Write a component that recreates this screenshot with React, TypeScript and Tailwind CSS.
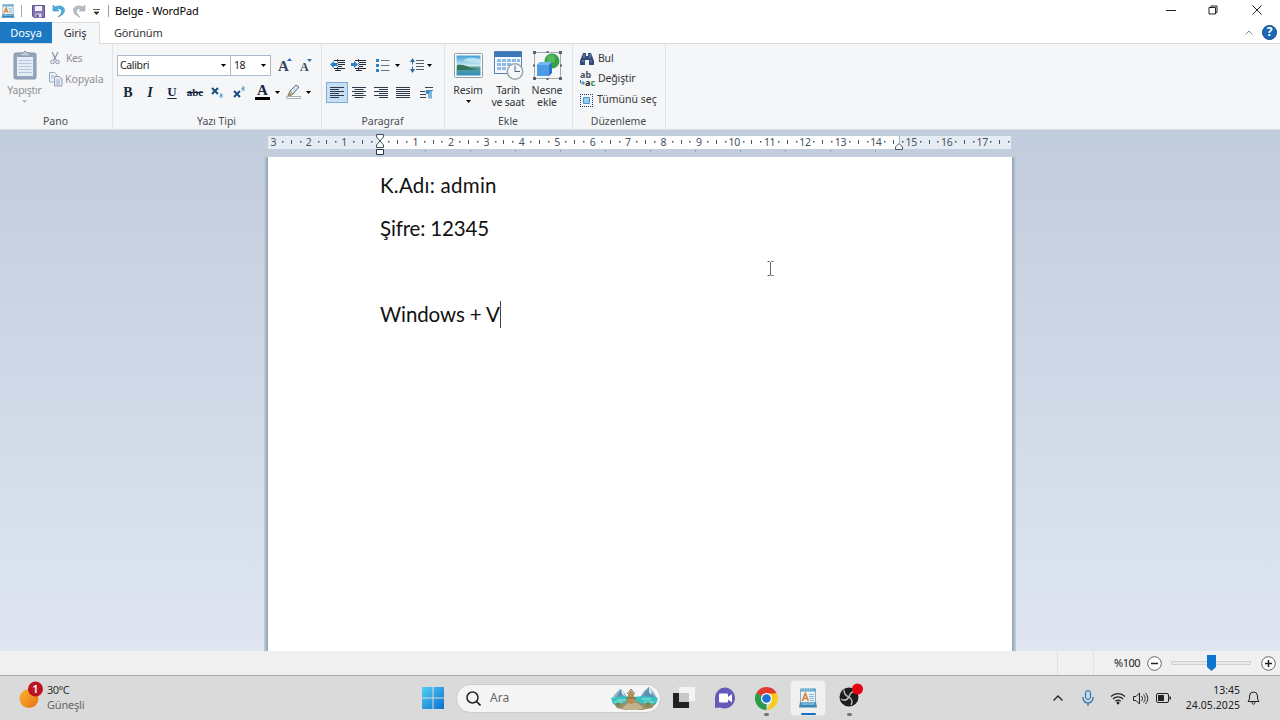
import type { ReactNode } from "react";

type IconProps = { w: number; h: number; className?: string; children: ReactNode };

function Icon({ w, h, className = "", children }: IconProps) {
  return (
    <svg width={w} height={h} viewBox={`0 0 ${w} ${h}`} fill="none" className={`block shrink-0 ${className}`}>
      {children}
    </svg>
  );
}

function Caret({ className = "" }: { className?: string }) {
  return (
    <Icon w={5} h={3} className={className}>
      <path d="M0 0h5L2.500 3z" fill="currentColor" />
    </Icon>
  );
}

function DocIcon({ size }: { size: number }) {
  return (
    <svg width={size} height={size} viewBox="0 0 20 20" className="block shrink-0">
      <path d="M2.500 1h15v14h-15z" fill="#e9f3f8" stroke="#6a9fbc" strokeWidth=".8" />
      <path d="M2.500.5h15v3h-15z" fill="#5aa2c8" />
      <path d="M4 .5v2M6.500.5v2M9 .5v2M11.500.5v2M14 .5v2" stroke="#d7eef8" strokeWidth=".8" />
      <path d="M4.300 13 7.300 5.500 10.300 13M5.500 10.500h3.600" stroke="#e07c34" strokeWidth="1.600" fill="none" />
      <path d="M11 6.500h5M11 8.500h5M11.500 10.500h4.500M12 12.500h4" stroke="#7fb2cd" strokeWidth=".9" />
      <path d="M2 14.500h16l1 5H1z" fill="#3b86b4" />
      <path d="M3.500 16h13" stroke="#b7dff0" />
    </svg>
  );
}

function TitleBar() {
  return (
    <header className="flex h-[22px] items-center bg-white">
      <div className="ml-px"><DocIcon size={14} /></div>
      <div className="ml-[6px] h-3 w-px bg-[#a9a9a9]" />
      <Icon w={13} h={13} className="ml-[10px]">
        <path d="M.5.5h12v12H2L.5 11z" fill="#8574b4" stroke="#62528f" />
        <path d="M3 1h7v5H3z" fill="#f3f2fa" />
        <path d="M3.500 8.500h6v4h-6z" fill="#dad7ea" />
        <path d="M4.500 9.500h2v3h-2z" fill="#54457f" />
      </Icon>
      <Icon w={13} h={14} className="ml-[7px]">
        <path d="M1 1v6h6L5 5c3-1 5 .5 4.500 3-.3 2-2 3.500-3.500 5 4-1.500 6.500-3.500 6.500-7C12.500 2.500 7.500.500 3 3z" fill="#4fabd9" stroke="#3490c2" strokeWidth=".6" />
      </Icon>
      <Icon w={13} h={14} className="ml-[8px]">
        <path d="M12 1v6H6l2-2C5 4 3 5.500 3.500 8c.3 2 2 3.500 3.500 5C3 11.500.5 9.500.5 6 .5 2.500 5.500.500 10 3z" fill="#b4bdc7" stroke="#98a3af" strokeWidth=".6" />
      </Icon>
      <Icon w={7} h={6} className="ml-[7px] mt-px">
        <path d="M0 .5h7M1 3h5L3.500 5.500z" stroke="#333" strokeWidth=".8" fill="#333" />
      </Icon>
      <div className="ml-[8px] h-3 w-px bg-[#999]" />
      <h1 className="ml-[6px] text-[11px] tracking-[-0.15px] text-black">Belge - WordPad</h1>
      <div className="ml-auto flex items-center text-[#222]">
        <Icon w={10} h={10} className="-mt-[2px]"><path d="M0 5.500h10" stroke="currentColor" /></Icon>
        <Icon w={10} h={10} className="-mt-[2px] ml-[32px]">
          <path d="M1 2.500h6.500V9H1zM3 2.500V1h6v6.500H7.500" stroke="currentColor" />
        </Icon>
        <Icon w={10} h={10} className="-mt-[2px] ml-[34px] mr-[18px]"><path d="m.5.5 9 9m0-9-9 9" stroke="currentColor" /></Icon>
      </div>
    </header>
  );
}

function Tabs() {
  return (
    <nav className="flex h-[22px] items-stretch border-b border-[#dadbdc] bg-white text-[11px]">
      <div className="flex w-[52px] items-center justify-center bg-[#1c78c3] pt-px text-white">Dosya</div>
      <div className="-mb-px flex w-[48px] items-center justify-center border-r border-t border-[#dadbdc] bg-[#f5f6f7] pr-px tracking-[-0.2px] text-[#333]">Giriş</div>
      <div className="flex items-center pl-[14px] pt-px tracking-[-0.3px] text-[#333]"><span className="tracking-[-0.2px]">Görünüm</span></div>
      <div className="ml-auto flex items-center gap-[9px] pr-[3px] pb-px">
        <Icon w={8} h={5}><path d="m.5 4.500 3.500-3.500 3.500 3.500" stroke="#8b8e94" /></Icon>
        <div className="flex size-[15px] items-center justify-center rounded-full border border-[#0d4c8e] bg-[#1d68b5] text-[12px] font-bold leading-none text-white">?</div>
      </div>
    </nav>
  );
}

function Group({ label, width, children }: { label: string; width: string; children: ReactNode }) {
  return (
    <section className={`flex shrink-0 flex-col border-r border-[#e1e3e6] ${width}`}>
      <div className="h-[70px]">{children}</div>
      <div className="flex h-[15px] items-center justify-center pr-px text-[10.500px] tracking-[-0.05px] text-[#4b4e53]">{label}</div>
    </section>
  );
}

function PasteGroup() {
  return (
    <Group label="Pano" width="w-[113px]">
      <div className="flex text-[10.500px] text-[#8e9197]">
        <div className="flex w-[49px] flex-col items-center pt-[6px]">
          <Icon w={24} h={30} className="ml-px">
            <rect x="1" y="3" width="22" height="26" rx="1.500" fill="#94a5bd" stroke="#8796ae" />
            <path d="M4 7h16v19H4z" fill="#e5ecf6" />
            <path d="M5.500 10.500h13m-13 3h13m-13 3h13m-13 3h13m-13 3h13" stroke="#b5c5dc" />
            <path d="M7 6V3h3l2-2 2 2h3v3z" fill="#bfcadb" stroke="#8291a8" />
          </Icon>
          <span className="mt-[3px] leading-[14px] tracking-[-0.25px]">Yapıştır</span>
          <Caret className="mt-[3px] text-[#b5b8bd]" />
        </div>
        <div className="pt-[6px]">
          <div className="flex h-4 items-center gap-[6px]">
            <Icon w={10} h={14} className="ml-[1px]">
              <path d="m2 1 4 8M8 1 4 9" stroke="#8996aa" strokeWidth="1.300" />
              <circle cx="2.500" cy="11" r="1.800" stroke="#8996aa" /><circle cx="7.500" cy="11" r="1.800" stroke="#8996aa" />
            </Icon>
            <span className="leading-none tracking-[-0.5px]">Kes</span>
          </div>
          <div className="mt-[5px] flex h-4 items-center gap-[2px]">
            <Icon w={14} h={15}>
              <path d="M.5.5h5L8 3v7H.5z" fill="#eef2f9" stroke="#9aa9c2" />
              <path d="M5.500 4.500h5L13 7v7H5.500z" fill="#e5ebf5" stroke="#8e9fbb" />
              <path d="M2 4h3M2 6h2m3 2h4m-4 2h4m-4 2h4" stroke="#9cabc8" />
            </Icon>
            <span className="leading-none tracking-[-0.05px]">Kopyala</span>
          </div>
        </div>
      </div>
    </Group>
  );
}

function FontGroup() {
  return (
    <Group label="Yazı Tipi" width="w-[209px]">
      <div className="mt-[11px] flex h-[21px] pl-[4px] text-[10.500px] text-[#222]">
        <div className="flex w-[114px] items-center justify-between border border-[#abbaca] bg-white pl-[2px] pr-[4px]"><span className="tracking-[-0.35px]">Calibri</span><Caret className="text-black" /></div>
        <div className="-ml-px flex w-[41px] items-center justify-between border border-[#abbaca] bg-white pl-[3px] pr-[4px]"><span className="tracking-[-0.4px]">18</span><Caret className="text-black" /></div>
        <div className="ml-[7px] flex w-[15px] font-['Liberation_Serif',serif] text-[15px] font-bold leading-[22px] text-[#34465d]">
          A<Icon w={5} h={3} className="-ml-[2px] mt-[3px]"><path d="m0 3 2.500-3L5 3z" fill="#2b71b5" /></Icon>
        </div>
        <div className="ml-[7px] flex w-[14px] font-['Liberation_Serif',serif] text-[12px] font-bold leading-[24px] text-[#34465d]">
          A<Icon w={5} h={3} className="-ml-[2px] mt-[4px]"><path d="M0 0h5L2.500 3z" fill="#2b71b5" /></Icon>
        </div>
      </div>
      <div className="mt-[5px] flex h-[22px] items-center pl-[4px] font-['Liberation_Serif',serif] text-[#14263e]">
        <span className="w-[22px] text-center text-[14px] font-bold">B</span>
        <span className="w-[22px] text-center text-[14px] font-bold italic">I</span>
        <span className="w-[22px] text-center text-[13px] font-bold underline decoration-1 underline-offset-2">U</span>
        <span className="w-[24px] pt-px text-center text-[11px] font-bold line-through decoration-1">abc</span>
        <Icon w={13} h={13} className="ml-[4px]">
          <path d="m1 2 6 6m0-6L1 8" stroke="#164b7d" strokeWidth="1.900" />
          <path d="M9 8h2v1.500H9V11h3" stroke="#3f91c2" strokeWidth=".9" />
        </Icon>
        <Icon w={13} h={13} className="ml-[9px]">
          <path d="m1 5 6 6m0-6-6 6" stroke="#164b7d" strokeWidth="1.900" />
          <path d="M9 1h2v1.500H9V4h3" stroke="#3f91c2" strokeWidth=".9" />
        </Icon>
        <div className="ml-[9px] flex w-[15px] flex-col items-center">
          <span className="text-[15px] font-bold leading-[13px]">A</span>
          <div className="h-[3px] w-full bg-black" />
        </div>
        <Caret className="ml-[5px] text-black" />
        <Icon w={15} h={16} className="ml-[6px]">
          <path d="M2 11.500 4 7l6-6 3 2-6 7-3 2z" fill="#d5e0ed" stroke="#65758b" />
          <path d="m4 7 3 3M2 12l2-3 1 2z" stroke="#9f8d4b" />
          <path d="M.5 12.500h14v2H.5z" fill="#fff" stroke="#a8afb8" />
        </Icon>
        <Caret className="ml-[5px] text-black" />
      </div>
    </Group>
  );
}

function AlignIcon({ kind }: { kind: "left" | "center" | "right" | "justify" }) {
  const paths = {
    left: "M0 .5h14M0 2.500h9M0 4.500h14M0 6.500h9M0 8.500h14M0 10.500h9",
    center: "M0 .5h14M2.500 2.500h9M0 4.500h14M2.500 6.500h9M0 8.500h14M2.500 10.500h9",
    right: "M0 .5h14M5 2.500h9M0 4.500h14M5 6.500h9M0 8.500h14M5 10.500h9",
    justify: "M0 .5h14M0 2.500h14M0 4.500h14M0 6.500h14M0 8.500h14M0 10.500h14",
  };
  return <Icon w={14} h={11}><path d={paths[kind]} stroke="#2e3949" /></Icon>;
}

function IndentIcon({ flip = false }: { flip?: boolean }) {
  return (
    <Icon w={15} h={13}>
      <path d="M4 1.500h11M8 3.500h7M8 5.500h7M8 7.500h4M4 9.500h11M5 11.500h6" stroke="#202a38" />
      <path d="M7.500 0v12" stroke="#536070" strokeDasharray="1 1" />
      <path d={flip ? "M0 4h3V2l4 3.500L3 9V7H0z" : "M7 4H4V2L0 5.500 4 9V7h3z"} fill="#2b80c7" />
    </Icon>
  );
}

function ParagraphGroup() {
  return (
    <Group label="Paragraf" width="w-[123px]">
      <div className="mt-[11px] flex h-[21px] items-center pl-[8px]">
        <IndentIcon />
        <div className="ml-[6px]"><IndentIcon flip /></div>
        <Icon w={14} h={13} className="ml-[10px]">
          <path d="M0 0h3v3H0zm0 5h3v3H0zm0 5h3v3H0z" fill="#2c83c6" />
          <path d="M5 1.500h8.500m-8.500 5h8.500m-8.500 5h8.500" stroke="#6a737f" />
        </Icon>
        <Caret className="ml-[5px] text-black" />
        <Icon w={15} h={15} className="ml-[10px]">
          <path d="M0 4 2.500 0 5 4H3v7h2l-2.500 4L0 11h2V4z" fill="#2669a8" />
          <path d="M0 7.500h5" stroke="#f5f6f7" strokeWidth="2" />
          <path d="M6 2.500h8m-8 3h8m-8 3h8m-8 3h8" stroke="#565e69" />
        </Icon>
        <Caret className="ml-[2px] text-black" />
      </div>
      <div className="mt-[5px] flex h-[22px] items-center pl-[4px]">
        <div className="flex h-[21px] w-[22px] items-center justify-center border border-[#79aedb] bg-[#c7dff5]"><AlignIcon kind="left" /></div>
        <div className="ml-[4px]"><AlignIcon kind="center" /></div>
        <div className="ml-[8px]"><AlignIcon kind="right" /></div>
        <div className="ml-[8px]"><AlignIcon kind="justify" /></div>
        <Icon w={13} h={13} className="ml-[10px]">
          <path d="M5 1.500h8M0 5.500h5M0 8.500h6M0 11.500h6" stroke="#37414f" />
          <path d="M9 4.500v8m2-8v8M6 4.500h7" stroke="#328ac5" strokeWidth="1.200" /><circle cx="7.500" cy="6" r="2" fill="#328ac5" />
        </Icon>
      </div>
    </Group>
  );
}

function InsertGroup() {
  return (
    <Group label="Ekle" width="w-[128px]">
      <div className="flex pl-[3px] text-center text-[10.500px] leading-[12px] text-[#33363b]">
        <div className="flex w-[40px] flex-col items-center pt-[9px]">
          <Icon w={29} h={25}>
            <defs><linearGradient id="sky" x1="0" y1="0" x2="0" y2="1"><stop stopColor="#3f9ed6" /><stop offset=".5" stopColor="#c6eaf0" /><stop offset=".6" stopColor="#5fa39c" /><stop offset="1" stopColor="#2b8dbd" /></linearGradient></defs>
            <rect x=".5" y=".5" width="28" height="24" rx="1" fill="#fbfcfd" stroke="#949da7" />
            <path d="M2.500 2.500h24v20h-24z" fill="url(#sky)" />
            <path d="M3 12c5-1 10 1 14 3l9 1-11 1L3 17z" fill="#367456" />
            <path d="M9 8c4-4 9-4 17-2v4z" fill="#d7f0f3" opacity=".7" />
          </Icon>
          <span className="mt-[6px] tracking-[-0.1px]">Resim</span>
          <Caret className="mt-[4px] text-black" />
        </div>
        <div className="flex w-[40px] flex-col items-center pt-[7px]">
          <Icon w={31} h={30}>
            <path d="M1.500.5h27v22h-27z" fill="#f6faff" stroke="#557fae" />
            <path d="M2 1h26v5H2z" fill="#3b77b8" />
            <path d="M4 8h4v3H4zm5 0h4v3H9zm5 0h4v3h-4zm5 0h4v3h-4zM4 12h4v3H4zm5 0h4v3H9zm5 0h4v3h-4zM4 16h4v3H4zm5 0h4v3H9zm15-8h3v3h-3z" fill="#8fbce6" />
            <circle cx="22" cy="20.500" r="7.700" fill="#f5f7f9" stroke="#a1a7af" strokeWidth="1.600" />
            <path d="M22 14.500v6h5" stroke="#4a6380" />
          </Icon>
          <span className="mt-[3px] tracking-[-0.2px]">Tarih<br />ve saat</span>
        </div>
        <div className="flex w-[38px] flex-col items-center pt-[7px]">
          <Icon w={29} h={29}>
            <path d="M1.500 1.500h26v26h-26z" stroke="#a5aab1" />
            <path d="M0 0h3v3H0zm13.500 0h2v2h-2zM26 0h3v3h-3zM0 13.500h2v2H0zm27 0h2v2h-2zM0 26h3v3H0zm13.500 1h2v2h-2zM26 26h3v3h-3z" fill="#5b626a" />
            <circle cx="19" cy="10" r="7.500" fill="#35a345" /><circle cx="18" cy="8" r="4" fill="#6ac86e" opacity=".6" />
            <path d="m4 14 3-3h12v11l-3 3H4z" fill="#2974c5" /><path d="m4 14 3-3h12l-3 3z" fill="#75b7ee" /><path d="M4 14h12v11H4z" fill="#4d9be2" />
          </Icon>
          <span className="mt-[4px] tracking-[-0.1px]">Nesne<br />ekle</span>
        </div>
      </div>
    </Group>
  );
}

function EditGroup() {
  return (
    <Group label="Düzenleme" width="w-[93px]">
      <div className="flex flex-col gap-[5px] pl-[7px] pt-[6px] text-[10.500px] text-[#33363b]">
        <div className="flex h-4 items-center gap-[4px] pt-px">
          <Icon w={14} h={14}>
            <path d="M3 1h3v3h2V1h3l3 8v4H9V8H5v5H0V9z" fill="#334b77" />
            <path d="M4 2v4M10 2v4M2 9h2m6 0h2" stroke="#8298bd" />
          </Icon>
          <span className="tracking-[-0.2px]">Bul</span>
        </div>
        <div className="flex h-4 items-center gap-[2px]">
          <div className="flex h-[16px] w-[16px] flex-col text-[9px] font-bold leading-[8px] text-[#46505d]">
            <span className="h-[8px] leading-[7px]">ab</span>
            <span className="flex h-[8px] items-center">
              <Icon w={5} h={6}><path d="M.5 0v3H4M2.500 1 4.500 3l-2 2" stroke="#2473b8" /></Icon>
              <span className="text-[#22262b]">a</span><span className="text-[#2f8b49]">c</span>
            </span>
          </div>
          <span className="tracking-[-0.15px]">Değiştir</span>
        </div>
        <div className="flex h-4 items-center gap-[4px] whitespace-nowrap">
          <Icon w={13} h={13}>
            <path d="M0 .5h13M0 12.500h13M.5 0v13M12.500 0v13" stroke="#1d3a5c" strokeDasharray="1 1" />
            <path d="M3.500 3.500h6v6h-6z" fill="#94cbed" stroke="#4697c7" />
          </Icon>
          <span>Tümünü seç</span>
        </div>
      </div>
    </Group>
  );
}

const CM = 35.42;
const ZERO = 112;

function Ruler() {
  const numbers = Array.from({ length: 21 }, (_, i) => i - 3);
  return (
    <div className="mx-auto mt-[6px] h-[21px] w-[744px]">
      <svg width="744" height="21" viewBox="0 0 744 21" className="block overflow-visible">
        <path d="M0 0h743v13H0z" fill="#e6ecf4" />
        <path d="M112 0h519v13H112z" fill="#fff" />
        {numbers.map((n) => {
          const x = ZERO + n * CM;
          return (
            <g key={n}>
              {n !== 0 && (
                <text x={x + (n < 0 ? -0.5 : 0)} y="10" textAnchor="middle" fontSize="10.500" letterSpacing="-0.300" fill="#46515f">{Math.abs(n)}</text>
              )}
              <g fill="#49535f">
                <rect x={Math.round(x + CM * 0.25 - 0.5)} y="5" width="1.500" height="1.500" />
                <rect x={Math.round(x + CM * 0.5 - 0.5)} y="4" width="1" height="4" />
                <rect x={Math.round(x + CM * 0.75 - 0.5)} y="5" width="1.500" height="1.500" />
              </g>
            </g>
          );
        })}
        {Array.from({ length: 11 }, (_, i) => (
          <rect key={i} x={Math.round(ZERO + (i + 1) * 45)} y="14" width="1" height="2" fill="#96a1b0" />
        ))}
        <path d="M108.500-1.500h7v2.500l-3.500 4 3.500 4v2.500h-7V9l3.500-4-3.500-4z" fill="#fff" stroke="#444f5c" />
        <path d="M108.500 13.500h7v5h-7z" fill="#fff" stroke="#273442" />
        <path d="M631.500 0v7" stroke="#a8b2bf" />
        <path d="M627.500 13.500v-2.500l3.500-3.500 3.500 3.500v2.500z" fill="#fff" stroke="#4d5967" />
      </svg>
    </div>
  );
}

function Workspace() {
  return (
    <main className="relative flex h-[521px] flex-col overflow-hidden bg-linear-to-b from-[#c1ccdc] to-[#dfe6f2]">
      <Ruler />
      <div className="flex flex-1 justify-center">
        <div className="w-[4px] bg-linear-to-r from-[#c3cddb] to-[#94a0b1]" />
        <article className="w-[744px] bg-white pl-[112px] pt-[7px] font-['Lato',sans-serif] text-[20.500px] leading-[43px] text-[#111]">
          <p className="tracking-[0.25px]">K.Adı: admin</p>
          <p className="tracking-[-0.15px]">Şifre: 12345</p>
          <p className="h-[43px]" />
          <p className="flex items-center tracking-[-0.1px]">Windows + V<span className="h-[27px] w-px bg-[#445]" /></p>
        </article>
        <div className="w-[4px] bg-linear-to-r from-[#94a0b1] to-[#c5cfdd]" />
      </div>
      <svg width="8" height="16" viewBox="0 0 8 16" className="absolute left-[767px] top-[131px]">
        <path d="M.5.5h2l1 1 1-1h2M3.500 1.500v13m-3 0h2l1-1 1 1h2" stroke="#666" fill="none" />
      </svg>
    </main>
  );
}

function StatusBar() {
  return (
    <div className="flex h-[24px] items-center bg-[#f0f0f0] text-[11px] text-[#222]">
      <div className="ml-[1057px] h-full w-[37px] border-x border-[#e0e0e0]" />
      <span className="ml-[20px] w-[27px] tracking-[-0.5px]">%100</span>
      <Icon w={15} h={15} className="ml-[6px]"><circle cx="7.500" cy="7.500" r="6.800" fill="#fff" stroke="#666" /><path d="M4 7.500h7" stroke="#222" strokeWidth="1.500" /></Icon>
      <Icon w={80} h={16} className="ml-[9px]">
        <path d="M.5 6.500h79v3H.5z" fill="#e9e9e9" stroke="#cfcfcf" />
        <path d="M36 0h9v12l-4.500 4-4.500-4z" fill="#0d74d0" />
      </Icon>
      <Icon w={15} h={15} className="ml-[10px]"><circle cx="7.500" cy="7.500" r="6.800" fill="#fff" stroke="#666" /><path d="M4 7.500h7M7.500 4v7" stroke="#222" strokeWidth="1.500" /></Icon>
    </div>
  );
}

function SearchArt() {
  return (
    <Icon w={47} h={24}>
      <path d="M1 12 5 7l4-4 4 3 3 5H1zM29 11l4-6 5-4 4 4 4 7z" fill="#8fb4cc" />
      <path d="m5 12 5-9 4 6 2 3zM30 12l4-6 4-5 2 6 5 5z" fill="#5f8fb0" />
      <path d="m10 3 3 3 1 5-3-3zM38 1l3 4-1 4-2-3z" fill="#d3e4ec" />
      <path d="M0 12c8-2 16-2 22-1 8-1 16-1 25 1l-2 6-6 3H8l-6-3z" fill="#35c2c1" />
      <path d="M6 14h9M3 16h9m19-3h9m-7 3h10" stroke="#9ceae6" />
      <path d="M3 18c5-2 8 0 12-1l7-2 8 2 8 2 7-2-4 5-10 2H15L6 22z" fill="#9a8d6a" />
      <path d="m11 22 6-5h9l7 5-6 2H15z" fill="#c2b28b" />
      <circle cx="7" cy="18.500" r="2" fill="#6d8b4f" /><circle cx="37" cy="18.500" r="2.500" fill="#7a8a4f" />
      <path d="m14 16 2-3 1-2v-3l3-4 3 4v3l1 2 2 3-6 2z" fill="#b38f57" />
      <path d="m16 8 4-5 4 5M15 12h10" stroke="#6e5b3b" strokeWidth=".8" />
    </Icon>
  );
}

function Taskbar() {
  return (
    <footer className="flex h-[45px] items-center border-t border-[#a9a9a9] bg-[#dadada]">
      <div className="flex w-[421px] shrink-0 items-center pl-[19px]">
        <Icon w={25} h={28} className="-mt-[6px]">
          <defs><linearGradient id="sun" x1="0" y1="0" x2="1" y2="1"><stop stopColor="#fbb830" /><stop offset="1" stopColor="#e56e12" /></linearGradient></defs>
          <circle cx="10" cy="17.500" r="9.500" fill="url(#sun)" />
          <circle cx="16.500" cy="8" r="7.500" fill="#b91420" />
          <text x="16.500" y="12" textAnchor="middle" fontSize="11" fontWeight="600" fill="#fff">1</text>
        </Icon>
        <div className="-mt-[2px] ml-[3px] text-[11px] leading-[15px] text-[#333]">
          <div className="tracking-[-0.5px]">30°C</div>
          <div className="tracking-[-0.2px] text-[#666]">Güneşli</div>
        </div>
      </div>
      <Icon w={22} h={22} className="ml-[1px]">
        <defs><linearGradient id="win" x1="0" y1="0" x2="1" y2="1"><stop stopColor="#55cef4" /><stop offset="1" stopColor="#0871cc" /></linearGradient></defs>
        <path d="M0 0h10.500v10.500H0zm11.500 0H22v10.500H11.500zM0 11.500h10.500V22H0zm11.500 0H22V22H11.500z" fill="url(#win)" />
      </Icon>
      <div className="ml-[12px] flex h-[29px] w-[205px] shrink-0 items-center rounded-full border border-[#ccc] bg-[#f5f5f5] pl-[9px] pr-[2px]">
        <Icon w={15} h={15}><circle cx="6.500" cy="6.500" r="5.500" stroke="#222" strokeWidth="1.500" /><path d="m10.500 10.500 4 4" stroke="#222" strokeWidth="1.700" /></Icon>
        <span className="ml-[9px] text-[12px] text-[#666]">Ara</span>
        <div className="ml-auto"><SearchArt /></div>
      </div>
      <Icon w={23} h={22} className="ml-[12px]">
        <path d="M6 0h16v14H6z" fill="#f4f4f4" />
        <path d="M0 6h6v9h10v6H0z" fill="#222" />
        <path d="M6 6h10v9H6z" fill="#c8c8c8" />
      </Icon>
      <Icon w={22} h={22} className="ml-[18px]">
        <path d="M11 .5A10.500 10.500 0 1 1 6 20.500L1 21V11A10.200 10.200 0 0 1 11 .500z" fill="#6559b9" />
        <rect x="5" y="6.500" width="9" height="9" rx="1" fill="#fff" /><path d="m14 10 4-3v8.500l-4-3z" fill="#fff" />
      </Icon>
      <div className="ml-[18px] flex h-[36px] w-[24px] flex-col items-center pt-[7px]">
        <Icon w={23} h={23}>
          <path d="M11.500 11.500 1.540 5.750A11.500 11.500 0 0 1 21.460 5.750z" fill="#e13b2d" />
          <path d="M11.500 11.500V23A11.500 11.500 0 0 1 1.540 5.750z" fill="#2a9b48" />
          <path d="M1.540 5.750h19.920L11.500 11.500z" fill="#e13b2d" />
          <path d="M11.500 6.500h10.300A11.500 11.500 0 0 1 11.500 23l5-8.500z" fill="#f9c91c" />
          <circle cx="11.500" cy="11.500" r="5.500" fill="#fff" /><circle cx="11.500" cy="11.500" r="4.300" fill="#1e74d7" />
        </Icon>
        <div className="mt-[3px] h-[3px] w-[5px] shrink-0 rounded-full bg-[#777]" />
      </div>
      <div className="ml-[12px] flex h-[36px] w-[36px] flex-col items-center rounded border border-[#e2e2e2] bg-[#f0f0f0] pt-[7px]">
        <DocIcon size={20} />
        <div className="mt-[5px] h-[3px] w-[15px] rounded-full bg-[#1971bf]" />
      </div>
      <div className="ml-[12px] flex h-[36px] w-[25px] flex-col items-center">
        <Icon w={25} h={30}>
          <circle cx="11" cy="17" r="9.500" fill="#1d1d1d" />
          <path d="M6 10c0 4 2 6 5 7 1-4 3-6 7-5M11 17c-2 3-5 4-8 2m8-2c3 2 4 5 2 8" stroke="#bdbdbd" strokeWidth="1.400" />
          <circle cx="19.500" cy="9" r="5.500" fill="#e60012" />
        </Icon>
        <div className="mr-[3px] mt-[3px] h-[3px] w-[5px] shrink-0 rounded-full bg-[#777]" />
      </div>
      <div className="ml-auto flex items-center text-[#222]">
        <Icon w={10} h={6}><path d="m.5 5.500 4.500-4.500 4.500 4.500" stroke="currentColor" strokeWidth="1.400" /></Icon>
        <Icon w={12} h={16} className="ml-[19px]"><rect x="3.500" y=".5" width="5" height="9" rx="2.500" stroke="#2467ae" fill="#bed9ed" /><path d="M1 7v1a5 5 0 0 0 10 0V7M6 13v3" stroke="#2467ae" strokeWidth="1.200" /></Icon>
        <Icon w={16} h={13} className="ml-[16px]">
          <path d="M1 4.500a10 10 0 0 1 14 0M3 7a7 7 0 0 1 10 0M5.300 9.300a4 4 0 0 1 5.400 0" stroke="currentColor" strokeWidth="1.200" /><circle cx="8" cy="11" r="1.400" fill="currentColor" />
        </Icon>
        <Icon w={16} h={13} className="ml-[7px]">
          <path d="M.5 4.500H3L6.500 1v11L3 8.500H.5zM8.500 4c1.300 1.500 1.300 3.500 0 5M10.500 2.500c2.200 2.500 2.200 5.500 0 8M12.500 1c3 3.500 3 7.500 0 11" stroke="currentColor" />
        </Icon>
        <Icon w={15} h={10} className="ml-[7px]"><rect x=".5" y=".5" width="12" height="9" rx="1.500" stroke="currentColor" /><path d="M2 2h6v6H2zm11.500 1.500H15v3h-1.500z" fill="currentColor" /></Icon>
        <div className="ml-[13px] w-[56px] whitespace-nowrap text-right text-[10.500px] leading-[15px]">
          <div>13:45</div>
          <div className="tracking-[0.05px]">24.05.2025</div>
        </div>
        <Icon w={13} h={15} className="ml-[7px] mr-[20px]"><path d="M1 10.500 2.500 8V5a4 4 0 0 1 8 0v3l1.500 2.500zM5 11c0 3 3 3 3 0" stroke="currentColor" /></Icon>
      </div>
    </footer>
  );
}

export default function App() {
  return (
    <div className="flex h-[720px] w-[1280px] flex-col overflow-hidden bg-white font-['Noto_Sans',sans-serif]">
      <TitleBar />
      <Tabs />
      <div className="flex h-[86px] border-b border-[#d8dfe8] bg-[#f5f6f7]">
        <PasteGroup />
        <FontGroup />
        <ParagraphGroup />
        <InsertGroup />
        <EditGroup />
      </div>
      <Workspace />
      <StatusBar />
      <Taskbar />
    </div>
  );
}
